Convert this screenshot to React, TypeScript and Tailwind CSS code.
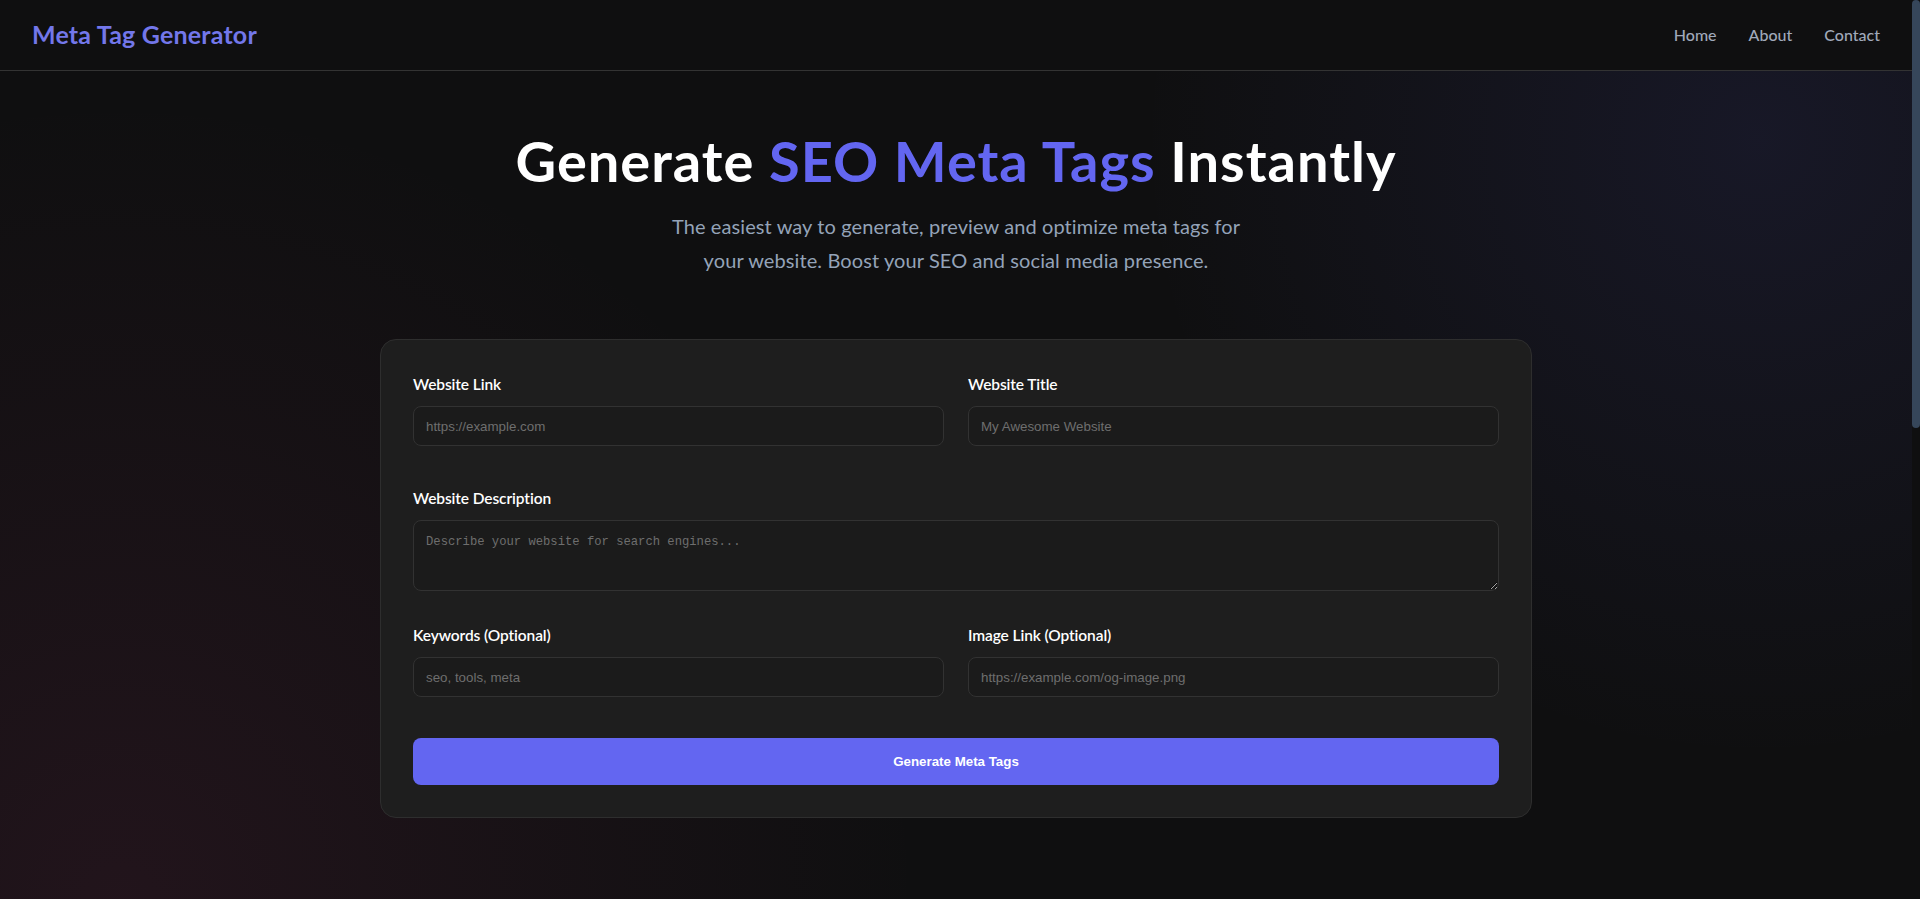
import React from "react";

function Field({ label, placeholder }: { label: string; placeholder: string }) {
  return (
    <div className="flex flex-col">
      <label className="mb-3 text-[15.5px] leading-5 font-semibold tracking-[-0.1px] text-white">{label}</label>
      <input
        type="text"
        placeholder={placeholder}
        className="h-10 w-full rounded-lg border border-[#323232] bg-[#1b1b1b] px-3 font-['Liberation_Sans',Arial,sans-serif] text-[13.33px] text-white outline-none placeholder:text-[#6e6e6e]"
      />
    </div>
  );
}

export default function App() {
  return (
    <div className="flex h-screen bg-[#0f0f10] bg-[radial-gradient(circle_620px_at_1760px_140px,rgba(99,102,241,0.1),transparent),radial-gradient(circle_800px_at_120px_900px,rgba(160,55,105,0.13),transparent)] font-['Lato',sans-serif]">
      <div className="min-w-0 flex-1 overflow-y-auto [scrollbar-width:none] [&::-webkit-scrollbar]:hidden">
        <div className="min-h-[1888px]">
          <header className="flex h-[71px] items-center justify-between border-b border-[#333333] bg-[#0f0f10] px-8">
            <div className="text-[25px] font-bold tracking-[0.2px] text-[#7377ea]">Meta Tag Generator</div>
            <nav className="flex gap-8 text-base font-medium text-[#a0a9ba]">
              <a href="#">Home</a>
              <a href="#">About</a>
              <a href="#">Contact</a>
            </nav>
          </header>

          <main className="px-8 pt-[58px]">
            <h1 className="text-center text-[56px] leading-[64px] font-bold tracking-[1px] text-white">
              Generate <span className="text-[#6366f1]">SEO Meta Tags</span> Instantly
            </h1>
            <p className="mt-4 text-center text-[20px] leading-[34px] tracking-[0.1px] text-[#94a3b8]">
              The easiest way to generate, preview and optimize meta tags for
              <br />
              your website. Boost your SEO and social media presence.
            </p>

            <div className="mx-auto mt-[62px] w-[1152px] rounded-2xl border border-[#2e2e2e] bg-[#1e1e1e] px-8 pt-[34px] pb-8">
              <div className="grid grid-cols-2 gap-6">
                <Field label="Website Link" placeholder="https://example.com" />
                <Field label="Website Title" placeholder="My Awesome Website" />
              </div>

              <div className="mt-[42px] flex flex-col">
                <label className="mb-3 text-[15.5px] leading-5 font-semibold tracking-[-0.1px] text-white">Website Description</label>
                <textarea
                  placeholder="Describe your website for search engines..."
                  className="block h-[71px] w-full rounded-lg border border-[#323232] bg-[#1b1b1b] px-3 py-3 font-['Liberation_Mono',monospace] text-[12.2px] text-white outline-none placeholder:text-[#6e6e6e]"
                />
              </div>

              <div className="mt-[34px] grid grid-cols-2 gap-6">
                <Field label="Keywords (Optional)" placeholder="seo, tools, meta" />
                <Field label="Image Link (Optional)" placeholder="https://example.com/og-image.png" />
              </div>

              <button
                type="button"
                className="mt-[41px] h-[47px] w-full rounded-lg bg-[#6366f1] font-['Liberation_Sans',Arial,sans-serif] text-[13.33px] font-bold text-white"
              >
                Generate Meta Tags
              </button>
            </div>
          </main>
        </div>
      </div>
      <div className="w-2 shrink-0 bg-[#0f0f10]">
        <div className="h-[428px] w-2 rounded-full bg-[#36465a]" />
      </div>
    </div>
  );
}
